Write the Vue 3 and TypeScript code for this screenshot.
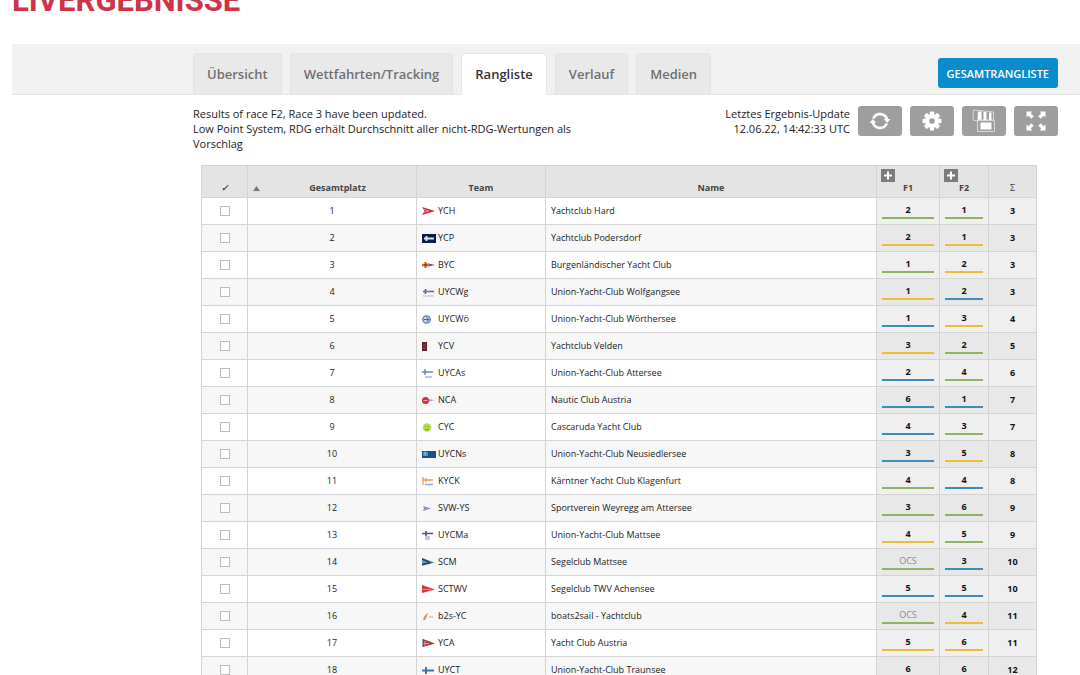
<script setup lang="ts">
import { ref } from 'vue'

type Fleet = 'green' | 'yellow' | 'blue'

interface Row {
  rank: number
  code: string
  name: string
  f1: string
  c1: Fleet
  f2: string
  c2: Fleet
  total: number
}

function row(rank: number, code: string, name: string, f1: string, c1: Fleet, f2: string, c2: Fleet, total: number): Row {
  return { rank, code, name, f1, c1, f2, c2, total }
}

const rows: Row[] = [
  row(1, 'YCH', 'Yachtclub Hard', '2', 'green', '1', 'green', 3),
  row(2, 'YCP', 'Yachtclub Podersdorf', '2', 'yellow', '1', 'yellow', 3),
  row(3, 'BYC', 'Burgenländischer Yacht Club', '1', 'green', '2', 'yellow', 3),
  row(4, 'UYCWg', 'Union-Yacht-Club Wolfgangsee', '1', 'yellow', '2', 'blue', 3),
  row(5, 'UYCWö', 'Union-Yacht-Club Wörthersee', '1', 'blue', '3', 'yellow', 4),
  row(6, 'YCV', 'Yachtclub Velden', '3', 'yellow', '2', 'green', 5),
  row(7, 'UYCAs', 'Union-Yacht-Club Attersee', '2', 'blue', '4', 'green', 6),
  row(8, 'NCA', 'Nautic Club Austria', '6', 'blue', '1', 'blue', 7),
  row(9, 'CYC', 'Cascaruda Yacht Club', '4', 'blue', '3', 'green', 7),
  row(10, 'UYCNs', 'Union-Yacht-Club Neusiedlersee', '3', 'blue', '5', 'yellow', 8),
  row(11, 'KYCK', 'Kärntner Yacht Club Klagenfurt', '4', 'green', '4', 'blue', 8),
  row(12, 'SVW-YS', 'Sportverein Weyregg am Attersee', '3', 'green', '6', 'green', 9),
  row(13, 'UYCMa', 'Union-Yacht-Club Mattsee', '4', 'yellow', '5', 'green', 9),
  row(14, 'SCM', 'Segelclub Mattsee', 'OCS', 'green', '3', 'blue', 10),
  row(15, 'SCTWV', 'Segelclub TWV Achensee', '5', 'blue', '5', 'blue', 10),
  row(16, 'b2s-YC', 'boats2sail - Yachtclub', 'OCS', 'green', '4', 'yellow', 11),
  row(17, 'YCA', 'Yacht Club Austria', '5', 'yellow', '6', 'yellow', 11),
  row(18, 'UYCT', 'Union-Yacht-Club Traunsee', '6', 'blue', '6', 'yellow', 12),
]

const tabs = ['Übersicht', 'Wettfahrten/Tracking', 'Rangliste', 'Verlauf', 'Medien']
const active = ref('Rangliste')
const selected = ref<string[]>([])
</script>

<template>
  <main class="page">
    <h1>LIVERGEBNISSE</h1>
    <nav class="bar">
      <div class="wrap bar-in">
        <div class="tabs">
          <button v-for="t in tabs" :key="t" type="button" class="tab" :class="{ on: t === active }" @click="active = t">{{ t }}</button>
        </div>
        <button type="button" class="overall">GESAMTRANGLISTE</button>
      </div>
    </nav>

    <section class="wrap info">
      <p class="notes">Results of race F2, Race 3 have been updated.<br>Low Point System, RDG erhält Durchschnitt aller nicht-RDG-Wertungen als Vorschlag</p>
      <div class="tools">
        <p class="update">Letztes Ergebnis-Update<br>12.06.22, 14:42:33 UTC</p>
        <button type="button" class="tool" aria-label="Aktualisieren">
          <svg width="22" height="20" viewBox="0 0 22 20" fill="none" stroke="#fff" stroke-width="2.6">
            <path d="M4.200 7.500a7.400 7.400 0 0 1 14 1.500M17.800 12.500a7.400 7.400 0 0 1-14-1.500" />
            <path d="M.5 12h6.600L3.800 8zM14.900 8h6.600l-3.300 4z" fill="#fff" stroke="none" />
          </svg>
        </button>
        <button type="button" class="tool" aria-label="Einstellungen">
          <svg width="20" height="20" viewBox="-10 -10 20 20">
            <g fill="#fff">
              <rect v-for="a in [0, 45, 90, 135]" :key="a" x="-2.200" y="-9.500" width="4.400" height="19" rx="1" :transform="`rotate(${a})`" />
              <circle r="7" />
            </g>
            <circle r="2.800" fill="#9e9e9e" />
          </svg>
        </button>
        <button type="button" class="tool" aria-label="Speichern">
          <svg width="24" height="24" viewBox="0 0 24 24">
            <path d="M1.500 1L21.500 3v8H5.500v1L1 11z" fill="none" stroke="#d8d8d8" stroke-width="1" />
            <path d="M6 2.500h3.500V11L5.500 10.500zM11.500 3h3v8h-3zM17 3.500h2.500V11H17z" fill="#fff" />
            <path d="M5.500 11.500h17v11h-17z" fill="#9e9e9e" stroke="#d8d8d8" />
            <path d="M8.500 13.500h11v7h-11z" fill="#fff" />
          </svg>
        </button>
        <button type="button" class="tool" aria-label="Vollbild">
          <svg width="20" height="20" viewBox="0 0 20 20" fill="#fff">
            <path v-for="a in [0, 90, 180, 270]" :key="a" d="M.5.500h6L4.700 2.300l3 3L5.300 7.700l-3-3L.5 6.500z" :transform="`rotate(${a} 10 10)`" />
          </svg>
        </button>
      </div>
    </section>

    <div class="wrap board">
      <table>
        <colgroup>
          <col class="w-check"><col class="w-rank"><col class="w-team"><col><col class="w-f1"><col class="w-f2"><col class="w-sum">
        </colgroup>
        <thead>
          <tr>
            <th class="tick">✓</th>
            <th><div class="rank-head"><svg width="7" height="5" viewBox="0 0 7 5"><path d="M3.500 0L7 5H0z" fill="#6d7b88" /></svg><span>Gesamtplatz</span></div></th>
            <th>Team</th>
            <th>Name</th>
            <th v-for="f in ['F1', 'F2']" :key="f">
              <div class="race">
                <button type="button" class="plus" :aria-label="`${f} aufklappen`"><svg width="14" height="13" viewBox="0 0 14 13"><path d="M7 2.500v8M3 6.500h8" stroke="#fff" stroke-width="2" /></svg></button>
                <span>{{ f }}</span>
              </div>
            </th>
            <th class="sigma">Σ</th>
          </tr>
        </thead>
        <tbody>
          <tr v-for="r in rows" :key="r.code">
            <td class="mid"><input v-model="selected" type="checkbox" :value="r.code" :aria-label="r.name"></td>
            <td class="mid">{{ r.rank }}</td>
            <td>
              <div class="team">
                <svg width="14" height="10" viewBox="0 0 14 10">
                  <template v-if="r.code === 'YCH'"><path d="M0 1l13 4L0 9l2.500-4z" fill="#c9293c" /><path d="M1 3.200L7 5 1 6.800" stroke="#f3c9cd" fill="none" stroke-width=".6" /></template>
                  <template v-else-if="r.code === 'YCP'"><path d="M0 1h14v9H0z" fill="#0c1c50" /><path d="M2 5.500h10M4.500 3v5" stroke="#dfe8f5" stroke-width="1.800" /></template>
                  <template v-else-if="r.code === 'BYC'"><path d="M6 3.500l7 1.500-7 1.500z" fill="#4a3b86" /><path d="M0 5h8M3.500 2v6" stroke="#c9682f" stroke-width="2.400" /><path d="M2.500 4h2v2h-2z" fill="#7c3340" /></template>
                  <template v-else-if="r.code === 'UYCWg'"><path d="M1 4.500h11M3.500 2v5" stroke="#5a6296" stroke-width="1.700" /><path d="M3 4.500h5" stroke="#b06878" /><path d="M1 9h11" stroke="#b4bbdc" /></template>
                  <template v-else-if="r.code === 'UYCWö'"><circle cx="4.500" cy="5.500" r="3.700" fill="#cfd8ee" stroke="#5f77ad" stroke-width="1.300" /><path d="M2 5.500h5M4.500 3.500L7 5.500 4.500 7.500" stroke="#4665a8" fill="none" /></template>
                  <template v-else-if="r.code === 'YCV'"><path d="M0 1h5v9H0z" fill="#5d2430" /><path d="M1 4h3M1 7h3" stroke="#9c4a48" /></template>
                  <template v-else-if="r.code === 'UYCAs'"><path d="M0 4h11M3 1v6" stroke="#6b87b5" stroke-width="1.400" /><path d="M3 9h7" stroke="#7b91c5" /></template>
                  <template v-else-if="r.code === 'NCA'"><path d="M6 4l7 1-7 2z" fill="#9faedd" /><circle cx="3.500" cy="5.500" r="3.500" fill="#d72e43" /><path d="M1.500 5.500h4" stroke="#f3b5bd" /></template>
                  <template v-else-if="r.code === 'CYC'"><circle cx="5" cy="5.500" r="4.300" fill="#b9dd43" /><path d="M3 4v1M6.500 4v1M3 7q2 2 4 0" stroke="#6f9b37" fill="none" /></template>
                  <template v-else-if="r.code === 'UYCNs'"><path d="M0 2h14v7H0z" fill="#15538f" /><path d="M1 4h5M3 2.500v4M1 6h5" stroke="#a6c7df" /></template>
                  <template v-else-if="r.code === 'KYCK'"><path d="M1 1v8M1 4h10M4 2v4" stroke="#e69a66" stroke-width="1.300" /><path d="M3 8.500h8" stroke="#91a5cf" stroke-width="1.500" /></template>
                  <template v-else-if="r.code === 'SVW-YS'"><path d="M1 3l8 2.500L1 8l1-2.500z" fill="#8794bd" /></template>
                  <template v-else-if="r.code === 'UYCMa'"><path d="M0 3.500h11M4 1v5" stroke="#514d7d" stroke-width="1.600" /><path d="M3 7h5M3 9h5" stroke="#8c8bb0" /></template>
                  <template v-else-if="r.code === 'SCM'"><path d="M0 1l13 4.500L0 9z" fill="#6c9ab5" /><path d="M0 2l7 3M0 7.500l9-2" stroke="#22425f" stroke-width="1.600" /></template>
                  <template v-else-if="r.code === 'SCTWV'"><path d="M0 1l13 4.500L0 9z" fill="#db3438" /><path d="M0 5.500h9" stroke="#f4a0a0" stroke-width=".7" /></template>
                  <template v-else-if="r.code === 'b2s-YC'"><path d="M1 9q1-5 5-7-1 4-3 7z" fill="#d59454" /><path d="M7 6h4" stroke="#e8cdb0" stroke-width="2" /></template>
                  <template v-else-if="r.code === 'YCA'"><path d="M1 1l12 4.500L1 9z" fill="#a73a4b" /><path d="M3 3v5M1 5.500h6" stroke="#e7c8ca" stroke-width=".7" /><path d="M1 1v8" stroke="#555" stroke-width="1" /></template>
                  <template v-else><path d="M0 5.500h12M4 2v7" stroke="#3e72b0" stroke-width="2" /></template>
                </svg>
                <span>{{ r.code }}</span>
              </div>
            </td>
            <td>{{ r.name }}</td>
            <td class="score"><span :class="[r.c1, { pen: r.f1 === 'OCS' }]">{{ r.f1 }}</span></td>
            <td class="score"><span :class="r.c2">{{ r.f2 }}</span></td>
            <td class="sum">{{ r.total }}</td>
          </tr>
        </tbody>
      </table>
    </div>
  </main>
</template>

<style>
html { overflow: hidden; }
body { margin: 0; background: #fff; }
</style>

<style scoped>
* { box-sizing: border-box; }
.page { padding-left: 12px; font-family: "Open Sans", "Noto Sans", sans-serif; color: #222; }
button { font-family: inherit; border: 0; padding: 0; cursor: pointer; }
h1 { margin: -16px 0 0; height: 60px; font: bold 31px/34px Roboto, "Open Sans", sans-serif; color: #cd3448; }
.wrap { padding-left: 181px; padding-right: 22px; }
.bar { background: #f1f1f1; border-bottom: 1px solid #e6e6e6; height: 51px; }
.bar-in { display: flex; justify-content: space-between; align-items: flex-end; height: 51px; }
.tabs { display: flex; gap: 8px; }
.tab { height: 42px; padding: 0 13px; background: #e9e9e9; border: 1px solid #e3e3e3; border-bottom-color: #e6e6e6; border-radius: 4px 4px 0 0; font-size: 13px; font-weight: 600; color: #707070; }
.tab.on { background: #fff; border-bottom-color: #fff; color: #333; }
.overall { height: 30px; margin-bottom: 7px; padding: 0 9px; border-radius: 3px; background: #0a8ccc; color: #fff; font-size: 11px; font-weight: 600; }
.info { display: flex; justify-content: space-between; align-items: flex-start; padding-top: 11px; font-size: 11px; line-height: 15px; height: 70px; }
.info p { margin: 0; }
.notes { width: 400px; }
.tools { display: flex; gap: 8px; }
.update { text-align: right; }
.tool { width: 44px; height: 30px; background: #9e9e9e; border-radius: 3px; display: flex; align-items: center; justify-content: center; }
.board { padding-left: 189px; padding-right: 43px; }
table { width: 100%; table-layout: fixed; border-collapse: collapse; font-size: 9px; line-height: 12px; }
.w-check { width: 46px; }
.w-rank { width: 169px; }
.w-team { width: 129px; }
.w-f1 { width: 63px; }
.w-f2 { width: 49px; }
.w-sum { width: 48px; }
th, td { border: 1px solid #d4d4d4; padding: 0 5px; height: 27px; }
th { background: #e4e4e4; height: 32px; vertical-align: bottom; padding-bottom: 3px; font-weight: 700; color: #444; }
.tick { font-style: italic; }
.rank-head { display: flex; align-items: center; }
.rank-head span { flex: 1; padding-left: 4px; }
.race { display: flex; flex-direction: column; align-items: center; }
.plus { align-self: flex-start; margin-left: -1px; width: 14px; height: 13px; background: #7b7b7b; }
.plus svg { display: block; }
.sigma { font-weight: 400; }
tbody tr:nth-child(even) { background: #f7f7f7; }
.mid { text-align: center; }
.mid input { appearance: none; display: block; width: 10px; height: 10px; margin: 0 auto; border: 1px solid #bbb; background: #fff; }
.mid input:checked { background: #0a8ccc; }
.team { display: flex; align-items: center; gap: 2px; }
.score, .sum { background: #efefef; text-align: center; font-weight: 700; color: #111; }
tr:nth-child(even) .score, tr:nth-child(even) .sum { background: #e8e8e8; }
.score span { display: block; border-bottom: 2px solid; padding-bottom: 1px; }
.score .green { border-color: #8db560; }
.score .yellow { border-color: #f0bb36; }
.score .blue { border-color: #3c8dba; }
.score .pen { font-weight: 400; color: #888; }
</style>
